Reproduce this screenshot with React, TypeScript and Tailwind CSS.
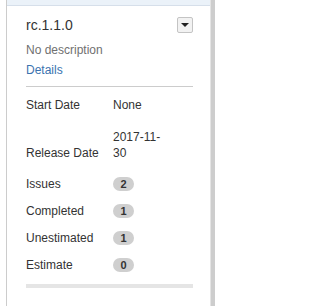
const rows = [
  { label: "Issues", count: 2 },
  { label: "Completed", count: 1 },
  { label: "Unestimated", count: 1 },
  { label: "Estimate", count: 0 },
];

function Badge({ value }: { value: number }) {
  return (
    <span className="flex h-[14px] w-[21px] items-center justify-center rounded-full bg-[#cfcfcf] text-[11px] font-bold leading-none text-[#333]">
      {value}
    </span>
  );
}

export default function App() {
  return (
    <div className="flex h-[306px] w-[215px] overflow-hidden bg-white font-['Liberation_Sans',Arial,sans-serif] text-[#333]">
      <div className="w-[6px] shrink-0" />
      <div className="flex w-[205px] shrink-0 flex-col border-l border-r border-l-[#cccccc] border-r-[#e4e4e4]">
        <div className="h-[6px] shrink-0 border-b border-[#d6dfea] bg-[#ebf2f9]" />
        <div className="flex flex-col pl-[19px] pr-[17px]">
          <div className="mt-[9px] flex h-5 items-center justify-between">
            <span className="text-[14px] leading-5">rc.1.1.0</span>
            <button className="flex h-4 w-4 items-center justify-center rounded-[2px] border border-[#c4c4c4] bg-[#f2f2f2]">
              <span className="h-0 w-0 border-x-[4px] border-t-[4px] border-x-transparent border-t-[#222]" />
            </button>
          </div>
          <p className="mt-[7px] text-[12px] leading-4 text-[#707070]">No description</p>
          <a className="mt-1 text-[12px] leading-4 text-[#3b73af]">Details</a>
          <div className="mt-2 h-px bg-[#cccccc]" />

          <div className="mt-[10px] flex text-[12px] leading-4">
            <span className="w-[87px]">Start Date</span>
            <span>None</span>
          </div>
          <div className="mt-4 flex items-end text-[12px] leading-4">
            <span className="w-[87px]">Release Date</span>
            <span className="w-[56px]">2017-11-30</span>
          </div>
          {rows.map((row, i) => (
            <div
              key={row.label}
              className={`flex items-center text-[12px] leading-4 ${i === 0 ? "mt-[15px]" : "mt-[11px]"}`}
            >
              <span className="w-[87px]">{row.label}</span>
              <Badge value={row.count} />
            </div>
          ))}
          <div className="mt-[11px] h-[4px] bg-[#e5e5e5]" />
        </div>
      </div>
      <div className="w-[4px] shrink-0 bg-[#cdcdcd]" />
    </div>
  );
}
